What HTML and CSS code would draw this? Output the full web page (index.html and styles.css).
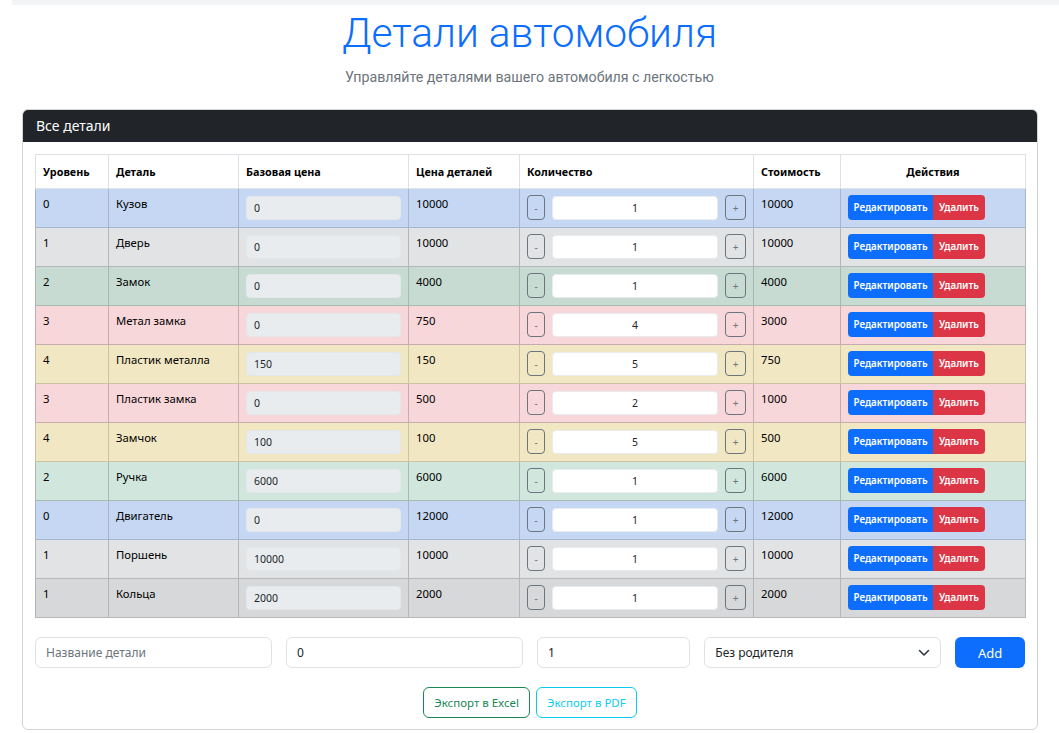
FILE: index.html
```html
<!DOCTYPE html>
<html lang="ru">
<head>
<meta charset="utf-8">
<title>Детали автомобиля</title>
<link rel="stylesheet" href="styles.css">
</head>
<body>
<div class="topbar"></div>
<header class="hero">
  <h1 class="hero-title">Детали автомобиля</h1>
  <p class="hero-sub">Управляйте деталями вашего автомобиля с легкостью</p>
</header>
<section class="card">
  <div class="card-header">Все детали</div>
  <div class="card-body">
    <table class="parts">
      <colgroup>
        <col class="c-level"><col class="c-name"><col class="c-base"><col class="c-price"><col class="c-qty"><col class="c-cost"><col class="c-act">
      </colgroup>
      <thead>
        <tr><th>Уровень</th><th>Деталь</th><th>Базовая цена</th><th>Цена деталей</th><th>Количество</th><th>Стоимость</th><th class="center">Действия</th></tr>
      </thead>
      <tbody>
        <tr class="primary striped"><td>0</td><td>Кузов</td><td><input class="base" value="0" readonly></td><td>10000</td><td><div class="qty"><button class="qb">-</button><input class="qi" value="1"><button class="qb plus">+</button></div></td><td>10000</td><td><div class="acts"><button class="edit">Редактировать</button><button class="del">Удалить</button></div></td></tr>
        <tr class="secondary"><td>1</td><td>Дверь</td><td><input class="base" value="0" readonly></td><td>10000</td><td><div class="qty"><button class="qb">-</button><input class="qi" value="1"><button class="qb plus">+</button></div></td><td>10000</td><td><div class="acts"><button class="edit">Редактировать</button><button class="del">Удалить</button></div></td></tr>
        <tr class="success striped"><td>2</td><td>Замок</td><td><input class="base" value="0" readonly></td><td>4000</td><td><div class="qty"><button class="qb">-</button><input class="qi" value="1"><button class="qb plus">+</button></div></td><td>4000</td><td><div class="acts"><button class="edit">Редактировать</button><button class="del">Удалить</button></div></td></tr>
        <tr class="danger"><td>3</td><td>Метал замка</td><td><input class="base" value="0" readonly></td><td>750</td><td><div class="qty"><button class="qb">-</button><input class="qi" value="4"><button class="qb plus">+</button></div></td><td>3000</td><td><div class="acts"><button class="edit">Редактировать</button><button class="del">Удалить</button></div></td></tr>
        <tr class="warning striped"><td>4</td><td>Пластик металла</td><td><input class="base" value="150" readonly></td><td>150</td><td><div class="qty"><button class="qb">-</button><input class="qi" value="5"><button class="qb plus">+</button></div></td><td>750</td><td><div class="acts"><button class="edit">Редактировать</button><button class="del">Удалить</button></div></td></tr>
        <tr class="danger"><td>3</td><td>Пластик замка</td><td><input class="base" value="0" readonly></td><td>500</td><td><div class="qty"><button class="qb">-</button><input class="qi" value="2"><button class="qb plus">+</button></div></td><td>1000</td><td><div class="acts"><button class="edit">Редактировать</button><button class="del">Удалить</button></div></td></tr>
        <tr class="warning striped"><td>4</td><td>Замчок</td><td><input class="base" value="100" readonly></td><td>100</td><td><div class="qty"><button class="qb">-</button><input class="qi" value="5"><button class="qb plus">+</button></div></td><td>500</td><td><div class="acts"><button class="edit">Редактировать</button><button class="del">Удалить</button></div></td></tr>
        <tr class="success"><td>2</td><td>Ручка</td><td><input class="base" value="6000" readonly></td><td>6000</td><td><div class="qty"><button class="qb">-</button><input class="qi" value="1"><button class="qb plus">+</button></div></td><td>6000</td><td><div class="acts"><button class="edit">Редактировать</button><button class="del">Удалить</button></div></td></tr>
        <tr class="primary striped"><td>0</td><td>Двигатель</td><td><input class="base" value="0" readonly></td><td>12000</td><td><div class="qty"><button class="qb">-</button><input class="qi" value="1"><button class="qb plus">+</button></div></td><td>12000</td><td><div class="acts"><button class="edit">Редактировать</button><button class="del">Удалить</button></div></td></tr>
        <tr class="secondary"><td>1</td><td>Поршень</td><td><input class="base" value="10000" readonly></td><td>10000</td><td><div class="qty"><button class="qb">-</button><input class="qi" value="1"><button class="qb plus">+</button></div></td><td>10000</td><td><div class="acts"><button class="edit">Редактировать</button><button class="del">Удалить</button></div></td></tr>
        <tr class="secondary striped"><td>1</td><td>Кольца</td><td><input class="base" value="2000" readonly></td><td>2000</td><td><div class="qty"><button class="qb">-</button><input class="qi" value="1"><button class="qb plus">+</button></div></td><td>2000</td><td><div class="acts"><button class="edit">Редактировать</button><button class="del">Удалить</button></div></td></tr>
      </tbody>
    </table>

    <form class="add-form">
      <input class="field span3" placeholder="Название детали">
      <input class="field span3" value="0">
      <input class="field span2" value="1">
      <div class="select-wrap span3">
        <select class="field select"><option>Без родителя</option></select>
        <svg class="chev" width="12" height="8" viewBox="0 0 12 8"><path d="M1.5 1.5 6 6l4.5-4.5" fill="none" stroke="#343a40" stroke-width="1.6" stroke-linecap="round" stroke-linejoin="round"/></svg>
      </div>
      <button type="button" class="add span1">Add</button>
    </form>

    <div class="exports">
      <button class="exp excel">Экспорт в Excel</button>
      <button class="exp pdf">Экспорт в PDF</button>
    </div>
  </div>
</section>
</body>
</html>
```
FILE: styles.css
```css
* { box-sizing: border-box; }
body {
  margin: 0;
  font-family: "Noto Sans", "Open Sans", sans-serif;
  color: #212529;
  background: #fff;
}
.topbar {
  height: 5px;
  margin-left: 12px;
  background: #f3f4f6;
}
.hero { text-align: center; }
.hero-title {
  margin: 3px 0 0;
  font-family: Roboto, "Noto Sans", sans-serif;
  font-weight: 300;
  font-size: 40.7px;
  line-height: 50px;
  color: #0d6efd;
}
.hero-sub {
  margin: 10px 0 0;
  font-family: Roboto, "Noto Sans", sans-serif;
  font-size: 14.2px;
  line-height: 18px;
  color: #6c757d;
}
.card {
  margin: 23px 21px 0 22px;
  border: 1px solid #d3d4d6;
  border-radius: 6px;
  overflow: hidden;
}
.card-header {
  background: #212529;
  color: #fff;
  height: 32px;
  padding: 0 13px;
  font-size: 14px;
  line-height: 32px;
}
.card-body { padding: 12px 12px 11px; }

.parts {
  width: 990px;
  table-layout: fixed;
  border-collapse: collapse;
  font-size: 11.3px;
}
.c-level { width: 73px; } .c-name { width: 130px; } .c-base { width: 170px; }
.c-price { width: 111px; } .c-qty { width: 234px; } .c-cost { width: 87px; } .c-act { width: 185px; }
.parts th {
  text-align: left;
  font-weight: 700;
  font-size: 10.8px;
  padding: 8px 7px;
  line-height: 17px;
  border: 1px solid #dee2e6;
  background: #fff;
  color: #000;
}
.parts th.center { text-align: center; }
.parts td {
  padding: 6px 7px 7px;
  line-height: 17px;
  vertical-align: top;
  border: 1px solid #dee2e6;
  color: #000;
}
tr.primary td { background: #cfe2ff; border-color: #a6b5cc; }
tr.primary.striped td { background: #c5d7f2; }
tr.secondary td { background: #e2e3e5; border-color: #b5b6b7; }
tr.secondary.striped td { background: #d7d8da; }
tr.success td { background: #d1e7dd; border-color: #a7b9b1; }
tr.success.striped td { background: #c7dbd2; }
tr.danger td { background: #f8d7da; border-color: #c6acae; }
tr.warning td { background: #fff3cd; border-color: #ccc2a4; }
tr.warning.striped td { background: #f2e7c3; }

input, button, select { font-family: inherit; }
.base {
  display: block;
  width: 100%;
  height: 24px;
  margin-top: 1px;
  border: 1px solid #e4e7ea;
  border-radius: 4px;
  background: #e9ecef;
  padding: 0 7px;
  font-size: 10.5px;
  color: #212529;
}
.qty { display: flex; gap: 7px; align-items: center; }
.qb {
  width: 18px;
  height: 25px;
  padding: 0;
  border: 1px solid #6c757d;
  border-radius: 4px;
  background: transparent;
  color: #6c757d;
  font-size: 10px;
  line-height: 1;
}
.qb.plus { width: 21px; }
.qi {
  flex: 1;
  min-width: 0;
  height: 24px;
  border: 1px solid #e9ecef;
  border-radius: 4px;
  background: #fff;
  text-align: center;
  font-size: 10.5px;
  color: #212529;
}
.acts { display: flex; }
.acts button {
  height: 25px;
  border: 0;
  color: #fff;
  font-size: 9.8px;
  font-weight: 600;
  padding: 0;
  text-align: center;
}
.edit { background: #0d6efd; border-radius: 4px 0 0 4px; width: 85px; }
.del { background: #dc3545; border-radius: 0 4px 4px 0; width: 52px; }

.add-form {
  display: grid;
  grid-template-columns: repeat(12, 1fr);
  column-gap: 14px;
  margin-top: 19px;
}
.span3 { grid-column: span 3; }
.span2 { grid-column: span 2; }
.span1 { grid-column: span 1; }
.field {
  height: 31px;
  border: 1px solid #dee2e6;
  border-radius: 6px;
  padding: 0 10px;
  font-size: 12px;
  color: #212529;
  background: #fff;
  width: 100%;
}
.field::placeholder { color: #6c757d; }
.select-wrap { position: relative; }
.select { appearance: none; -webkit-appearance: none; }
.chev { position: absolute; right: 11px; top: 12px; }
.add {
  height: 31px;
  border: 0;
  border-radius: 6px;
  background: #0d6efd;
  color: #fff;
  font-size: 13px;
}
.exports {
  display: flex;
  justify-content: center;
  gap: 6px;
  margin-top: 19px;
}
.exp {
  height: 31px;
  padding: 0 10px;
  background: #fff;
  border-radius: 6px;
  font-size: 11.5px;
}
.excel { border: 1px solid #198754; color: #198754; }
.pdf { border: 1px solid #0dcaf0; color: #0dcaf0; }
```
